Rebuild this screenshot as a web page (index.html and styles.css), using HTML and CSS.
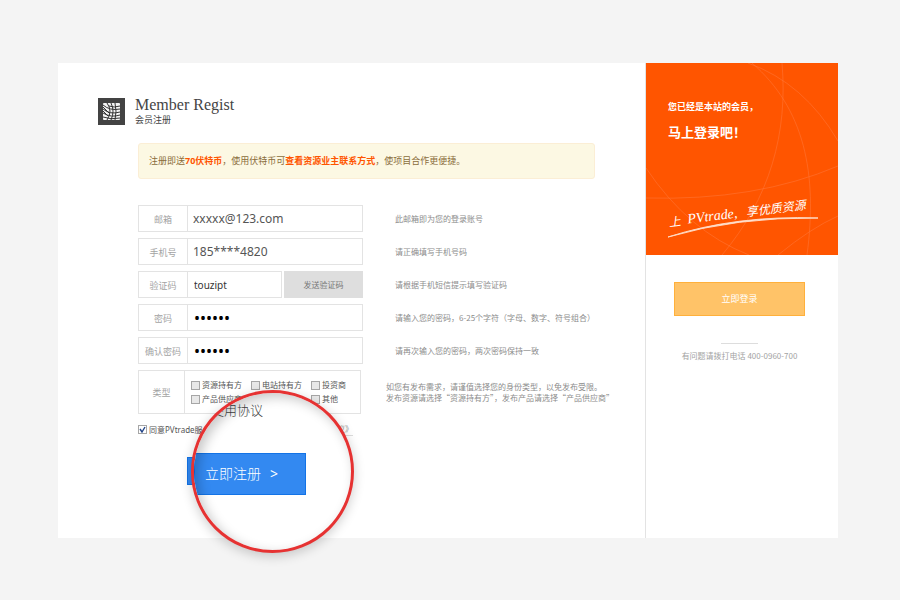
FILE: index.html
```html
<!DOCTYPE html>
<html lang="zh-CN">
<head>
<meta charset="utf-8">
<title>会员注册</title>
<link rel="stylesheet" href="styles.css">
</head>
<body>
<div class="card">
  <main class="main">
    <header class="brand">
      <svg class="logo" viewBox="0 0 27 27" aria-hidden="true">
        <rect width="27" height="27" fill="#434343"/>
        <rect x="5" y="5" width="17" height="17" rx="1" fill="#f4f4f4"/>
        <g fill="none" stroke="#333" stroke-width="1">
          <path d="M11 8q5 2 11 0M5 7q7 6 17 4M5 11q7 6 17 3M5 15q8 5 17 2M5 19q8 3 17 1"/>
          <path d="M9 5q6 8 0 17M13 5q4 8 0 17M17 5q2 8 0 17M5 9l6 6M5 13l5 5"/>
        </g>
      </svg>
      <div>
        <h1 class="title">Member Regist</h1>
        <p class="subtitle">会员注册</p>
      </div>
    </header>
    <form class="form">
      <p class="notice">注册即送<strong>70伏特币</strong>，使用伏特币可<strong>查看资源业主联系方式</strong>，使项目合作更便捷。</p>
      <div class="row">
        <div class="field"><label for="email">邮箱</label><input class="large" id="email" type="text" value="xxxxx@123.com"></div>
        <p class="hint">此邮箱即为您的登录账号</p>
      </div>
      <div class="row">
        <div class="field"><label for="phone">手机号</label><input class="large" id="phone" type="text" value="185****4820"></div>
        <p class="hint">请正确填写手机号码</p>
      </div>
      <div class="row">
        <div class="code">
          <div class="field"><label for="code">验证码</label><input id="code" type="text" value="touzipt"></div>
          <button class="send" type="button">发送验证码</button>
        </div>
        <p class="hint">请根据手机短信提示填写验证码</p>
      </div>
      <div class="row">
        <div class="field"><label for="pw">密码</label><input class="secret" id="pw" type="password" value="123456"></div>
        <p class="hint">请输入您的密码，6-25个字符（字母、数字、符号组合）</p>
      </div>
      <div class="row">
        <div class="field"><label for="pw2">确认密码</label><input class="secret" id="pw2" type="password" value="123456"></div>
        <p class="hint">请再次输入您的密码，两次密码保持一致</p>
      </div>
      <div class="row types-row">
        <div class="types" role="group" aria-labelledby="type-label">
          <span class="types-label" id="type-label">类型</span>
          <div class="options">
            <label><input type="checkbox">资源持有方</label>
            <label><input type="checkbox">电站持有方</label>
            <label><input type="checkbox">投资商</label>
            <label class="wide"><input type="checkbox">产品供应商</label>
            <label><input type="checkbox">其他</label>
          </div>
        </div>
        <p class="hint">如您有发布需求，请谨值选择您的身份类型，以免发布受限。<br>发布资源请选择“资源持有方”，发布产品请选择“产品供应商”</p>
      </div>
      <div class="finish">
        <div class="agree">
          <label><input type="checkbox" checked>同意PVtrade服务条款</label>
          <a class="terms" href="#">《使用协议》</a>
        </div>
        <div class="submit-back"></div>
        <div class="lens">
          <a class="lens-link" href="#">使用协议</a>
          <button class="submit" type="submit">立即注册<span>&gt;</span></button>
        </div>
      </div>
    </form>
  </main>
  <aside class="side">
    <section class="promo">
      <svg class="arcs" viewBox="0 0 192 192" aria-hidden="true">
        <g fill="none" stroke="#ff7a3d" stroke-opacity=".5">
          <path d="M102 0Q158 20 192 78M136 0C142 70 124 135 76 192M0 105Q42 168 103 192M0 135Q110 138 192 103M106 0C158 45 172 110 161 192M132 192Q165 165 192 153"/>
        </g>
      </svg>
      <p class="promo-small">您已经是本站的会员，</p>
      <p class="promo-big">马上登录吧！</p>
      <svg class="slogan" viewBox="0 0 152 44">
        <g fill="#fff" transform="rotate(-7 0 30)">
          <text class="brush" x="1" y="32">上</text>
          <text class="script" x="20" y="31">PVtrade,</text>
          <text class="brush" x="79" y="31">享优质资源</text>
        </g>
        <path d="M0 42Q68 20 150 23Q68 22 0 42" fill="#fff" stroke="#ffd9c2" stroke-width="1"/>
      </svg>
    </section>
    <section class="login">
      <button class="login-button" type="button">立即登录</button>
      <p class="support">有问题请拨打电话 400-0960-700</p>
    </section>
  </aside>
</div>
</body>
</html>
```
FILE: styles.css
```css
* { box-sizing: border-box; }
body {
  margin: 0;
  padding: 63px 62px 62px 58px;
  background: #f4f4f4;
  color: #555;
  font: 9px/12px "Noto Sans", "Noto Sans CJK SC", sans-serif;
}
h1, p { margin: 0; }
button, input { font: inherit; margin: 0; }
.card {
  display: grid;
  grid-template-columns: 1fr 193px;
  background: #fff;
}
.main { padding: 33px 40px 43px; min-width: 0; }
.brand { display: flex; gap: 10px; }
.logo { width: 27px; height: 27px; margin-top: 2px; }
.title {
  color: #444;
  font: 16px/18px "Liberation Serif", serif;
}
.subtitle { color: #444; line-height: 12px; }
.form { padding-left: 40px; }
.notice {
  max-width: 457px;
  margin: 17px 0 26px;
  padding: 11px 10px;
  border: 1px solid #fbeed5;
  border-radius: 3px;
  background: #fcf8e3;
  color: #8a6d3b;
}
.notice strong { color: #ff5500; }
.row {
  display: grid;
  grid-template-columns: 225px 1fr;
  gap: 32px;
  align-items: center;
  margin-bottom: 6px;
}
.hint {
  color: #8c8c8c;
  font-family: "Noto Sans CJK SC", sans-serif;
  font-size: 8px;
  line-height: 11px;
  white-space: nowrap;
}
.field {
  display: flex;
  height: 27px;
  border: 1px solid #e3e3e3;
  flex: 1;
  min-width: 0;
}
.field label {
  flex: 0 0 49px;
  border-right: 1px solid #e3e3e3;
  color: #a3a3a3;
  line-height: 27px;
  text-align: center;
}
.field input {
  flex: 1;
  min-width: 0;
  padding: 0 6px;
  border: 0;
  background: none;
  color: #333;
  font-size: 10px;
}
.field .large { padding: 0 5px; color: #555; font-size: 12px; }
.field .secret { color: #000; font-size: 16px; }
.code { display: flex; gap: 2px; }
.send {
  width: 79px;
  height: 27px;
  padding: 0;
  border: 0;
  background: #dedede;
  color: #777;
  font-size: 8px;
}
.types-row { grid-template-columns: 223px 1fr; gap: 25px; }
.types {
  display: flex;
  height: 44px;
  border: 1px solid #e3e3e3;
}
.types-label {
  flex: 0 0 46px;
  border-right: 1px solid #e3e3e3;
  color: #a3a3a3;
  line-height: 44px;
  text-align: center;
}
.options {
  display: grid;
  grid-template-columns: 60px 60px 1fr;
  align-content: center;
  row-gap: 2px;
  padding-left: 6px;
  font-size: 8px;
}
.options label, .agree label { display: flex; align-items: center; gap: 2px; }
.options .wide { grid-column: span 2; }
input[type="checkbox"] {
  appearance: none;
  width: 9px;
  height: 9px;
  border: 1px solid #a6a6a6;
  background: #e8e8e8;
}
input[type="checkbox"]:checked {
  background: #fff url("data:image/svg+xml,%3Csvg xmlns='http://www.w3.org/2000/svg' viewBox='0 0 7 7'%3E%3Cpath d='M1 3l2 3 3-5' fill='none' stroke='%23224488' stroke-width='1.4'/%3E%3C/svg%3E");
}
.finish { position: relative; }
.agree {
  display: flex;
  justify-content: space-between;
  width: 215px;
  padding-top: 3px;
  font-size: 8px;
}
.terms { color: #999; text-decoration: none; border-bottom: 1px solid #ddd; }
.submit-back {
  width: 98px;
  height: 28px;
  margin: 21px 0 10px 49px;
  border: 1px solid #1373e6;
  background: #3389f1;
}
.lens {
  position: absolute;
  top: -30px;
  left: 53px;
  width: 163px;
  height: 163px;
  overflow: hidden;
  border: 3px solid #e63232;
  border-radius: 50%;
  background: #fff;
  box-shadow: 0 3px 12px rgba(0, 0, 0, .2);
}
.lens::after {
  content: "";
  position: absolute;
  inset: 0;
  border-radius: 50%;
  box-shadow: inset 4px 4px 12px rgba(0, 0, 0, .22);
  pointer-events: none;
}
.lens-link {
  display: block;
  margin: 8px 0 0 17px;
  color: #444;
  font-size: 13px;
  font-weight: 300;
  line-height: 18px;
  text-decoration: none;
}
.submit {
  width: 112px;
  height: 42px;
  margin-top: 34px;
  padding: 0 0 0 10px;
  border: 1px solid #1373e6;
  background: #3389f1;
  color: #fff;
  font-size: 14px;
  font-weight: 300;
  text-align: left;
}
.submit span { margin-left: 9px; font-weight: 400; }
.side { border-left: 1px solid #e3e3e3; }
.promo {
  position: relative;
  height: 192px;
  padding: 38px 22px 0;
  background: #ff5500;
  color: #fff;
  font-weight: 500;
}
.arcs { position: absolute; inset: 0; }
.promo-small { position: relative; font-weight: 600; white-space: nowrap; }
.promo-big {
  position: relative;
  margin-top: 9px;
  font-size: 13px;
  line-height: 20px;
  font-weight: 600;
}
.slogan {
  display: block;
  position: relative;
  width: 152px;
  height: 44px;
  margin-top: 53px;
}
.brush { font: italic 12px "Noto Sans CJK SC", sans-serif; }
.script { font: italic 14px "Liberation Serif", serif; }
.login { padding: 27px 33px 0 28px; }
.login-button {
  display: block;
  width: 100%;
  height: 34px;
  border: 1px solid #ffb03b;
  background: #ffc368;
  color: #fff;
}
.support {
  margin-top: 27px;
  color: #a3a3a3;
  font-family: "Noto Sans CJK SC", sans-serif;
  font-size: 8px;
  text-align: center;
  white-space: nowrap;
}
.support::before {
  content: "";
  display: block;
  width: 37px;
  margin: 0 auto 6px;
  border-top: 1px solid #ddd;
}
```
